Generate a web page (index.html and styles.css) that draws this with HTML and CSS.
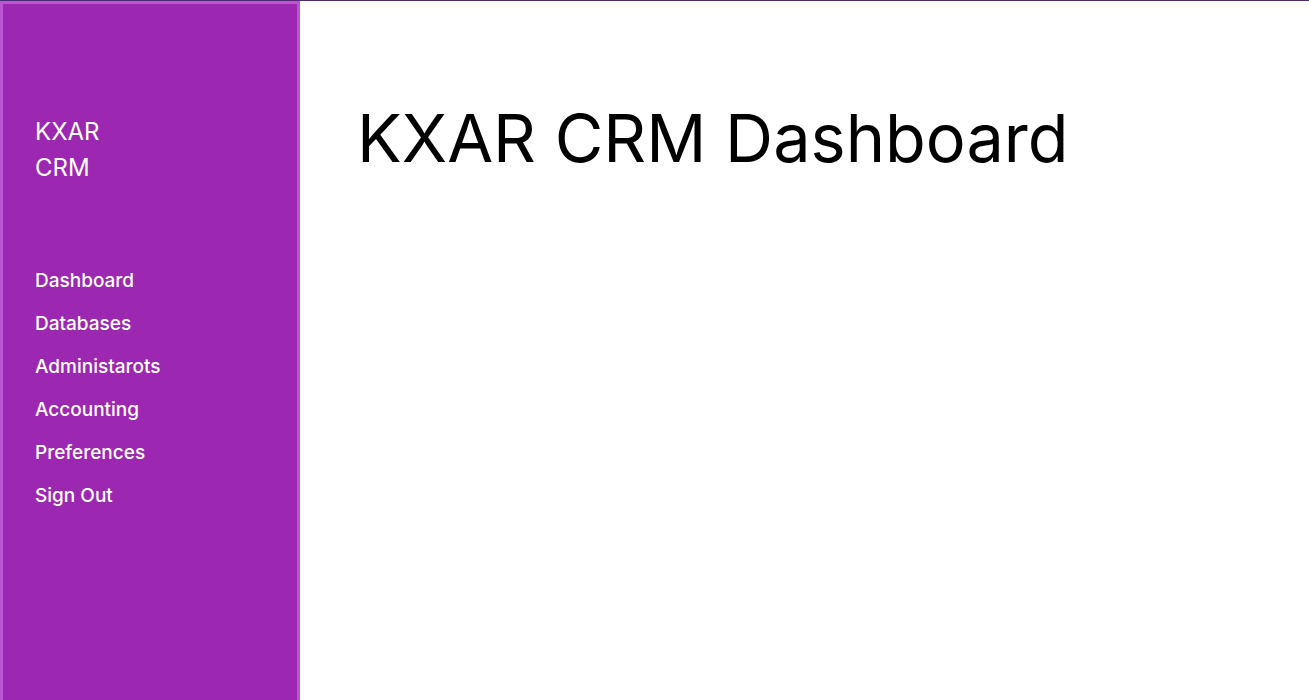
FILE: index.html
```html
<!DOCTYPE html>
<html>
<head>
<meta charset="utf-8">
<title>KXAR CRM Dashboard</title>
<link rel="stylesheet" href="styles.css">
</head>
<body>
<div class="app">
  <aside class="sidebar">
    <div class="logo">KXAR CRM</div>
    <nav class="nav">
      <a class="nav-link" href="#">Dashboard</a>
      <a class="nav-link" href="#">Databases</a>
      <a class="nav-link" href="#">Administarots</a>
      <a class="nav-link" href="#">Accounting</a>
      <a class="nav-link" href="#">Preferences</a>
      <a class="nav-link" href="#">Sign Out</a>
    </nav>
  </aside>
  <main class="main">
    <h1 class="title">KXAR CRM Dashboard</h1>
  </main>
</div>
</body>
</html>
```
FILE: styles.css
```css
html, body {
  margin: 0;
  padding: 0;
  height: 100%;
}
body {
  font-family: "Inter", "Liberation Sans", sans-serif;
  background: #ffffff;
  border-top: 1px solid #4b2d6b;
  box-sizing: border-box;
  overflow: hidden;
}
.app {
  display: flex;
  height: 100%;
}
.sidebar {
  width: 300px;
  flex: 0 0 300px;
  box-sizing: border-box;
  background: #9c27b0;
  border: 3px solid #ba55d3;
  border-bottom: none;
  padding: 110px 0 0 32px;
  display: flex;
  flex-direction: column;
  gap: 73px;
}
.logo {
  color: #ffffff;
  font-size: 24px;
  line-height: 36px;
  width: 90px;
}
.nav {
  display: flex;
  flex-direction: column;
}
.nav-link {
  color: #ffffff;
  text-decoration: none;
  font-size: 19px;
  line-height: 43px;
  font-weight: 500;
}
.main {
  flex: 1;
  padding: 97px 0 0 57px;
}
.title {
  margin: 0;
  font-size: 66.6px;
  line-height: 80px;
  font-weight: 400;
  color: #000000;
}
```
